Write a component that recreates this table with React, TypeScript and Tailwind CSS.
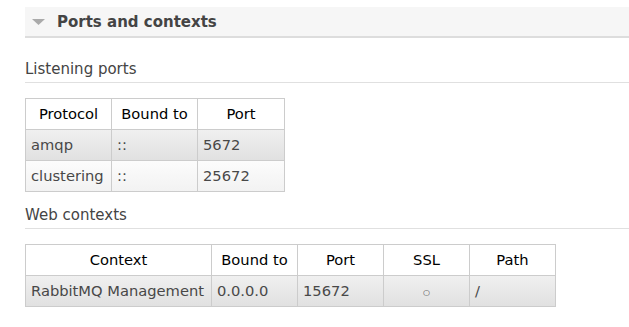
import React from "react";

const font = { fontFamily: '"DejaVu Sans", Verdana, sans-serif' };

function HeadCell({ children, w }: { children: React.ReactNode; w: string }) {
  return (
    <th className={`border border-[#cccccc] bg-white font-normal text-black text-center h-[31px] p-0 ${w}`}>
      {children}
    </th>
  );
}

function Cell({ children, center }: { children: React.ReactNode; center?: boolean }) {
  return (
    <td className={`border border-[#cccccc] text-[#484848] h-[31px] py-0 px-[5px] ${center ? "text-center" : "text-left"}`}>
      {children}
    </td>
  );
}

export default function App() {
  return (
    <div className="bg-white w-[629px] h-[327px] overflow-hidden text-[14.7px] leading-[18px]" style={font}>
      <div className="pl-[25px] pt-[7px]">
        <div className="flex items-center h-[31px] bg-[#f6f6f6] border-b-2 border-[#dddddd] pl-[7px]">
          <svg width="13" height="7" viewBox="0 0 13 7" className="mr-[12px] mt-[1px]">
            <polygon points="0,0 13,0 6.5,6" fill="#aaaaaa" />
          </svg>
          <span className="font-bold text-[15px] text-[#444444]">Ports and contexts</span>
        </div>

        <div className="mt-[22px] border-b border-[#e0e0e0] pb-[4px] text-[#444444] text-[15px] leading-[18px]">Listening ports</div>

        <table className="mt-[15px] border-collapse">
          <thead>
            <tr>
              <HeadCell w="w-[86px]">Protocol</HeadCell>
              <HeadCell w="w-[86px]">Bound to</HeadCell>
              <HeadCell w="w-[87px]">Port</HeadCell>
            </tr>
          </thead>
          <tbody>
            <tr className="bg-gradient-to-b from-[#f0f0f0] to-[#e0e0e0]">
              <Cell>amqp</Cell>
              <Cell>::</Cell>
              <Cell>5672</Cell>
            </tr>
            <tr className="bg-gradient-to-b from-[#fcfcfc] to-[#f2f2f2]">
              <Cell>clustering</Cell>
              <Cell>::</Cell>
              <Cell>25672</Cell>
            </tr>
          </tbody>
        </table>

        <div className="mt-[14px] border-b border-[#e0e0e0] pb-[4px] text-[#444444] text-[15px] leading-[18px]">Web contexts</div>

        <table className="mt-[15px] border-collapse">
          <thead>
            <tr>
              <HeadCell w="w-[186px]">Context</HeadCell>
              <HeadCell w="w-[86px]">Bound to</HeadCell>
              <HeadCell w="w-[86px]">Port</HeadCell>
              <HeadCell w="w-[86px]">SSL</HeadCell>
              <HeadCell w="w-[86px]">Path</HeadCell>
            </tr>
          </thead>
          <tbody>
            <tr className="bg-gradient-to-b from-[#f0f0f0] to-[#e0e0e0]">
              <Cell>RabbitMQ Management</Cell>
              <Cell>0.0.0.0</Cell>
              <Cell>15672</Cell>
              <Cell center>
                <span className="text-[8px] align-[-1px]">○</span>
              </Cell>
              <Cell>/</Cell>
            </tr>
          </tbody>
        </table>
      </div>
    </div>
  );
}
